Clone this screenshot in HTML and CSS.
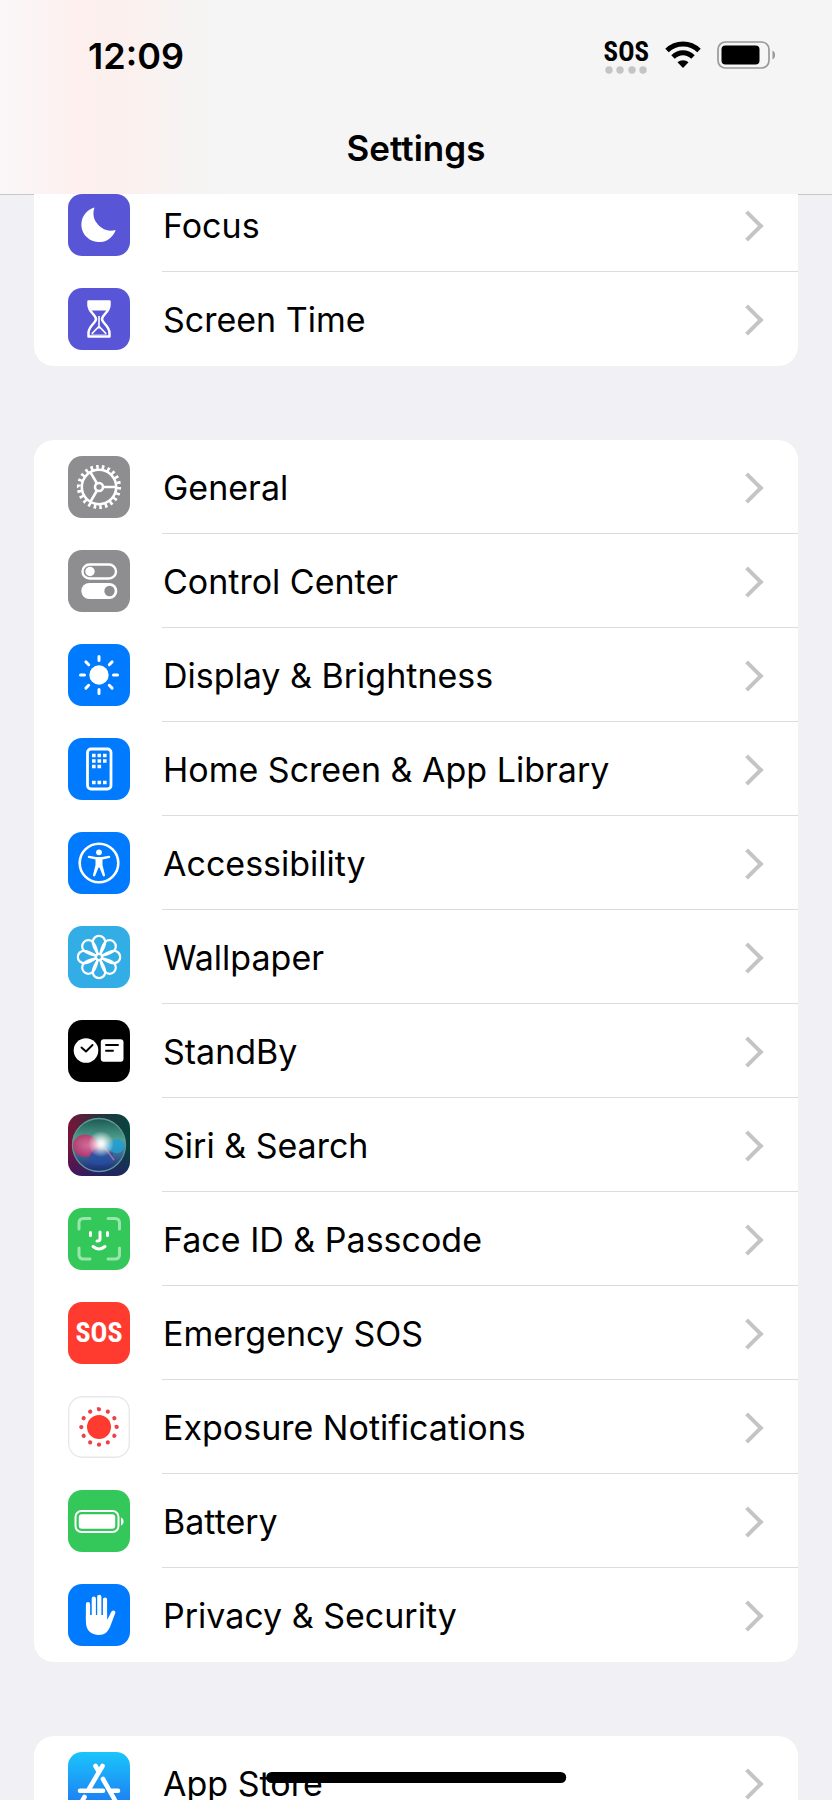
FILE: index.html
```html
<!DOCTYPE html>
<html lang="en">
<head>
    <meta charset="UTF-8">
    <meta name="viewport" content="width=device-width, initial-scale=1.0">
    <title>Settings</title>
    <link rel="stylesheet" href="styles.css">
</head>
<body>
    <header class="header">
        <div class="status-bar">
            <time class="clock">12:09</time>
            <div class="status-icons">
                <div class="carrier">
                    <span class="carrier-text">SOS</span>
                    <svg width="42" height="8" viewBox="0 0 42 8" fill="#c4c4c4"><circle cx="4" cy="4" r="3.7"/><circle cx="15" cy="4" r="3.7"/><circle cx="27" cy="4" r="3.7"/><circle cx="38" cy="4" r="3.7"/></svg>
                </div>
                <svg width="36" height="28" viewBox="0 0 36 28">
                    <g fill="none" stroke="#000" stroke-width="5">
                        <path d="M2 9.5C11 .8 25 .8 34 9.5"/>
                        <path d="M8 16C14 10.300 22 10.300 28 16"/>
                    </g>
                    <path d="M12.500 21.300C15.500 18.400 20.500 18.400 23.500 21.300L18 27Z"/>
                </svg>
                <svg width="60" height="28" viewBox="0 0 60 28">
                    <rect x="1" y="1" width="51" height="26" rx="7.500" fill="none" stroke="#999" stroke-width="1.700"/>
                    <rect x="4.500" y="4.500" width="38" height="19" rx="4"/>
                    <path d="M55.500 9.500c3.400 1.300 3.400 7.700 0 9z" fill="#999"/>
                </svg>
            </div>
        </div>
        <h1 class="title">Settings</h1>
    </header>

    <main class="settings">
        <nav class="group">
            <a class="row" href="#focus">
                <svg class="icon indigo" viewBox="0 0 62 62"><path fill="#fff" d="M26.500 13.500A17.600 17.600 0 1 0 47.700 36A17.500 17.500 0 0 1 26.500 13.500Z"/></svg>
                <span class="label">Focus</span>
            </a>
            <a class="row" href="#screen-time">
                <svg class="icon indigo" viewBox="0 0 62 62">
                    <path fill="none" stroke="#fff" stroke-width="2.500" stroke-linejoin="round" d="M20.500 13.500H41.500V17C41.500 24 34 27 34 31C34 35 41.500 38 41.500 45V48.500H20.500V45C20.500 38 28 35 28 31C28 27 20.500 24 20.500 17Z"/>
                    <path fill="#fff" d="M20.500 13.500H41.500V17L38.500 22.500H23.500L20.500 17ZM30.200 28H31.800V38L38.500 45V46.500H23.500V45L30.200 38Z"/>
                    <path fill="#5856d6" d="M24.500 46.200L30 40.500H32L37.500 46.200Z"/>
                </svg>
                <span class="label">Screen Time</span>
            </a>
        </nav>

        <nav class="group">
            <a class="row" href="#general">
                <svg class="icon gray" viewBox="0 0 62 62">
                    <g fill="none" stroke="#fff" stroke-width="2.600">
                        <circle cx="31" cy="31" r="17.200"/>
                        <circle cx="31" cy="31" r="20" stroke-width="4.200" pathLength="44" stroke-dasharray=".9 1.100"/>
                        <circle cx="31" cy="31" r="4"/>
                        <path d="M35 31H48M29 27.500L22.500 16.300M29 34.500L22.500 45.700"/>
                    </g>
                </svg>
                <span class="label">General</span>
            </a>
            <a class="row" href="#control-center">
                <svg class="icon gray" viewBox="0 0 62 62">
                    <rect x="14.500" y="14.500" width="33.500" height="14" rx="7" fill="none" stroke="#fff" stroke-width="2.400"/>
                    <circle cx="22" cy="21.500" r="4.700" fill="#fff"/>
                    <rect x="13.300" y="33" width="36" height="16" rx="8" fill="#fff"/>
                    <circle cx="41.500" cy="41" r="5.200" fill="#8e8e90"/>
                </svg>
                <span class="label">Control Center</span>
            </a>
            <a class="row" href="#display">
                <svg class="icon blue" viewBox="0 0 62 62">
                    <circle cx="31" cy="31" r="9.700" fill="#fff"/>
                    <path stroke="#fff" stroke-width="3" stroke-linecap="round" d="M31 12.500V16.500M31 45.500V49.500M12.500 31H16.500M45.500 31H49.500M17.900 17.900L20.700 20.700M41.300 41.300L44.100 44.100M17.900 44.100L20.700 41.300M41.300 20.700L44.100 17.900"/>
                </svg>
                <span class="label">Display &amp; Brightness</span>
            </a>
            <a class="row" href="#home-screen">
                <svg class="icon blue" viewBox="0 0 62 62">
                    <rect x="19.500" y="11" width="23.500" height="40" rx="3.500" fill="none" stroke="#fff" stroke-width="2.800"/>
                    <path stroke="#fff" stroke-width="3.600" stroke-dasharray="3.600 1.900" d="M24 17.500H38.600M24 23H38.600M24 28.500H33.100M24 44.500H38.600"/>
                </svg>
                <span class="label">Home Screen &amp; App Library</span>
            </a>
            <a class="row" href="#accessibility">
                <svg class="icon blue" viewBox="0 0 62 62">
                    <circle cx="31" cy="31" r="19.300" fill="none" stroke="#fff" stroke-width="2.600"/>
                    <circle cx="31" cy="20.300" r="2.900" fill="#fff"/>
                    <path fill="#fff" d="M21 23.700L28 25H34L41 23.700C42.600 23.700 42.600 25.800 41.300 26.100L34.500 27.600V33L37 43C37.200 44.700 35.200 45 34.700 43.500L31.500 35.500H30.500L27.300 43.500C26.800 45 24.800 44.700 25 43L27.500 33V27.600L20.700 26.100C19.400 25.800 19.400 23.700 21 23.700Z"/>
                </svg>
                <span class="label">Accessibility</span>
            </a>
            <a class="row" href="#wallpaper">
                <svg class="icon cyan" viewBox="0 0 62 62">
                    <defs><path id="petal" d="M31 31C30 27 24.800 22 24.800 16A6.200 6.200 0 0 1 37.200 16C37.200 22 32 27 31 31Z"/></defs>
                    <g fill="none" stroke="#fff" stroke-width="2.200">
                        <use href="#petal"/>
                        <use href="#petal" transform="rotate(45 31 31)"/>
                        <use href="#petal" transform="rotate(90 31 31)"/>
                        <use href="#petal" transform="rotate(135 31 31)"/>
                        <use href="#petal" transform="rotate(180 31 31)"/>
                        <use href="#petal" transform="rotate(225 31 31)"/>
                        <use href="#petal" transform="rotate(270 31 31)"/>
                        <use href="#petal" transform="rotate(315 31 31)"/>
                        <circle cx="31" cy="31" r="3" fill="#32ade6"/>
                    </g>
                </svg>
                <span class="label">Wallpaper</span>
            </a>
            <a class="row" href="#standby">
                <svg class="icon black" viewBox="0 0 62 62">
                    <circle cx="18" cy="30.500" r="12.300" fill="#fff"/>
                    <rect x="32.800" y="19.300" width="22.700" height="22.500" rx="3" fill="#fff"/>
                    <path fill="none" stroke="#000" stroke-width="1.900" stroke-linecap="round" stroke-linejoin="round" d="M13.500 27.500L18 31.500L24.500 25M38 25H50M38 30.700H45"/>
                </svg>
                <span class="label">StandBy</span>
            </a>
            <a class="row" href="#siri">
                <svg class="icon siri" viewBox="0 0 62 62">
                    <defs>
                        <linearGradient id="orb" x1="0" y1="0" x2="0" y2="1">
                            <stop offset="0" stop-color="#1b5a50"/>
                            <stop offset=".42" stop-color="#55a597"/>
                            <stop offset=".58" stop-color="#437d99"/>
                            <stop offset="1" stop-color="#1b287c"/>
                        </linearGradient>
                        <radialGradient id="pink"><stop offset="0" stop-color="#f5639b"/><stop offset="1" stop-color="#c92d66"/></radialGradient>
                        <radialGradient id="glow">
                            <stop offset="0" stop-color="#fff"/>
                            <stop offset=".25" stop-color="#fff" stop-opacity=".85"/>
                            <stop offset="1" stop-color="#fff" stop-opacity="0"/>
                        </radialGradient>
                    </defs>
                    <circle cx="31" cy="31" r="26.500" fill="url(#orb)" stroke="#5f9995" stroke-width="1.300"/>
                    <path fill="url(#pink)" opacity=".8" d="M5 29C9 18 23 18 29 27L35 33C29 36 26 43 18 43C10 43 4 38 5 29Z"/>
                    <path fill="#229fd3" opacity=".85" d="M33 33L44 27C50 22 56 27 56.500 31C56 38 49 42 44 37Z"/>
                    <path fill="#244fa9" opacity=".65" d="M28 34C19 41 18 49 29 51C39 52 46 46 45 39Z"/>
                    <path stroke="#dc7ba4" stroke-width="1.500" opacity=".7" d="M37 34L46 46"/>
                    <circle cx="33" cy="30" r="13" fill="url(#glow)"/>
                </svg>
                <span class="label">Siri &amp; Search</span>
            </a>
            <a class="row" href="#face-id">
                <svg class="icon green" viewBox="0 0 62 62">
                    <g fill="none" stroke-width="3" stroke-linecap="round">
                        <path stroke="#98e6ab" d="M11 21V15Q11 10.500 15.500 10.500H22M40 10.500H47Q51.500 10.500 51.500 15V21M51.500 40V46.500Q51.500 51 47 51H40M22 51H15.500Q11 51 11 46.500V40"/>
                        <path stroke="#fff" d="M22.500 24.500V27.500M39.500 24.500V27.500M32 24V31Q32 33 29 33M25 38.500Q31 43.500 37 38.500"/>
                    </g>
                </svg>
                <span class="label">Face ID &amp; Passcode</span>
            </a>
            <a class="row" href="#emergency">
                <span class="icon red">SOS</span>
                <span class="label">Emergency SOS</span>
            </a>
            <a class="row" href="#exposure">
                <svg class="icon white" viewBox="0 0 62 62">
                    <rect x=".7" y=".7" width="60.600" height="60.600" rx="13.500" fill="none" stroke="#e8e8eb" stroke-width="1.400"/>
                    <circle cx="31" cy="31" r="12" fill="#ff3b30"/>
                    <circle cx="31" cy="31" r="17.700" fill="none" stroke="#ed4146" stroke-width="4.200" stroke-linecap="round" pathLength="120" stroke-dasharray=".01 9.990"/>
                </svg>
                <span class="label">Exposure Notifications</span>
            </a>
            <a class="row" href="#battery">
                <svg class="icon green" viewBox="0 0 62 62">
                    <rect x="7.500" y="21" width="43" height="21" rx="6" fill="none" stroke="#fff" stroke-width="2"/>
                    <rect x="10.800" y="24.300" width="36.400" height="14.400" rx="3" fill="#fff"/>
                    <path fill="#fff" d="M53 27.500c3.400 1.200 3.400 6.800 0 8z"/>
                </svg>
                <span class="label">Battery</span>
            </a>
            <a class="row" href="#privacy">
                <svg class="icon blue" viewBox="0 0 62 62">
                    <g fill="none" stroke="#fff" stroke-width="4.200" stroke-linecap="round">
                        <path d="M20 20V36M25.800 14.500V34M31.300 12.800V34M37 15.500V34"/>
                    </g>
                    <path fill="#fff" d="M17.900 31H39.100V35.500C41 33.500 42.200 29.500 43.500 27.500C45 25.500 48 26.500 47.300 29L42 43C39.800 48 36.500 51 31 51C23 51 17.900 46 17.900 38Z"/>
                </svg>
                <span class="label">Privacy &amp; Security</span>
            </a>
        </nav>

        <nav class="group">
            <a class="row" href="#app-store">
                <svg class="icon store" viewBox="0 0 62 62">
                    <path fill="none" stroke="#fff" stroke-width="4.600" stroke-linecap="round" d="M34.500 14L21 37M27.500 14L31 20M35 27L48.500 51M12 38.700H35M42 38.700H50M16.500 45L13 51"/>
                </svg>
                <span class="label">App Store</span>
            </a>
        </nav>
    </main>
    <div class="home-indicator"></div>
</body>
</html>
```
FILE: styles.css
```css
* {
    box-sizing: border-box;
}

body {
    margin: 0;
    height: 100vh;
    overflow: hidden;
    background-color: #f0f0f5;
    color: #000;
    font-family: Inter, "Liberation Sans", sans-serif;
}

.header {
    height: 195px;
    border-bottom: 1px solid #c8c8ca;
    background: linear-gradient(90deg, #faf7f8 0, #fbf4f4 36px, #fdf0ef 75px, #fbf0ee 130px, #f6f4f3 185px, #f5f5f5 230px);
}

.status-bar {
    display: flex;
    justify-content: space-between;
    height: 112px;
    padding: 34px 55px 0 88px;
}

.clock {
    font-size: 36px;
    font-weight: 600;
    line-height: 44px;
}

.status-icons {
    display: flex;
    align-items: flex-start;
    gap: 16px;
    padding-top: 7px;
}

.carrier {
    display: flex;
    flex-direction: column;
    align-items: center;
    gap: 3px;
}

.carrier-text {
    font-family: "Roboto Condensed", "Open Sans Condensed", "Liberation Sans Narrow", "Liberation Sans", sans-serif;
    font-size: 27px;
    font-weight: 700;
    line-height: 22px;
}

.title {
    margin: 0;
    font-size: 35px;
    font-weight: 600;
    line-height: 72px;
    text-align: center;
}

/* the first group is scrolled partly under the header */
.settings {
    display: flex;
    flex-direction: column;
    gap: 74px;
    margin-top: -17px;
    padding: 0 34px;
}

.group {
    border-radius: 20px;
    background-color: #fff;
}

.group:first-child {
    border-radius: 0 0 20px 20px;
    clip-path: inset(16px 0 0 0);
}

.row {
    display: flex;
    align-items: center;
    gap: 32px;
    height: 94px;
    padding-left: 34px;
    color: inherit;
    text-decoration: none;
}

.icon {
    flex: none;
    width: 62px;
    height: 62px;
    border-radius: 14px;
}

.label {
    flex: 1;
    display: flex;
    align-items: center;
    justify-content: space-between;
    height: 94px;
    padding: 2px 39px 0 1px;
    border-bottom: 1px solid #dcdcde;
    font-size: 34px;
}

.row:last-child .label {
    border-bottom-color: transparent;
}

/* chevron */
.label::after {
    content: "";
    width: 18px;
    height: 18px;
    border: solid #c4c4c6;
    border-width: 4px 4px 0 0;
    transform: rotate(45deg);
}

.indigo {
    background-color: #5856d6;
}

.gray {
    background-color: #8e8e90;
}

.blue {
    background-color: #007aff;
}

.cyan {
    background-color: #32ade6;
}

.black {
    background-color: #000;
}

.green {
    background-color: #34c759;
}

.white {
    background-color: #fff;
}

.siri {
    background: linear-gradient(0deg, rgba(40, 20, 120, 0.6), transparent 50%), linear-gradient(90deg, #7b1238, #26333f 50%, #07453f);
}

.store {
    background: linear-gradient(#1bc5fb, #1d70f2);
}

.red {
    background-color: #ff3b30;
    color: #fff;
    font-family: "Roboto Condensed", "Open Sans Condensed", "Liberation Sans Narrow", "Liberation Sans", sans-serif;
    font-size: 28px;
    font-weight: 700;
    line-height: 62px;
    text-align: center;
}

.home-indicator {
    position: fixed;
    bottom: 17px;
    left: 50%;
    width: 36%;
    height: 11px;
    border-radius: 6px;
    background-color: #000;
    transform: translateX(-50%);
}
```
